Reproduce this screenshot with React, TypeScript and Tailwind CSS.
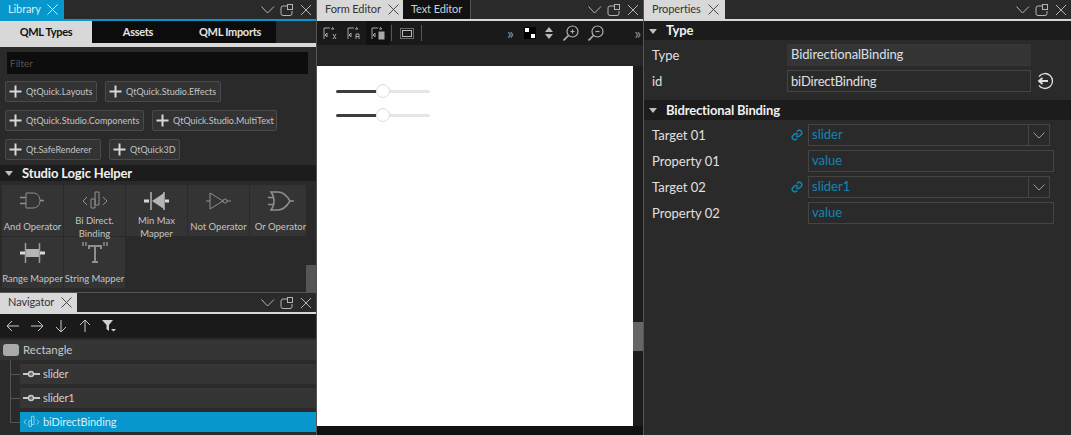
const font = "font-['Lato','Noto_Sans',sans-serif]";

function HeaderIcons() {
  return (
    <div className="ml-auto flex items-center pr-[5px]">
      <svg width="50" height="14" viewBox="0 0 50 14" fill="none" stroke="#b4b4b4" strokeWidth="1">
        <path d="M0.5 3.5 L6.5 10 L13 3.5" />
        <path d="M26 3 H22 a2 2 0 0 0 -2 2 V10.5 a2 2 0 0 0 2 2 H29 a2 2 0 0 0 2 -2 V8" />
        <rect x="26.5" y="1.5" width="5" height="5" />
        <path d="M40 2 L50 12 M50 2 L40 12" />
      </svg>
    </div>
  );
}

function CloseX({ color = "#4a4a4a" }: { color?: string }) {
  return (
    <svg width="11" height="11" viewBox="0 0 11 11" fill="none" stroke={color} strokeWidth="1" className="shrink-0">
      <path d="M0.5 0.5 L10.5 10.5 M10.5 0.5 L0.5 10.5" />
    </svg>
  );
}

function Tab({ label, w, active = false, blue = false }: { label: string; w: string; active?: boolean; blue?: boolean }) {
  if (blue) {
    return (
      <div className={`flex h-[19px] items-center gap-[6px] whitespace-nowrap bg-[#0797cd] pl-[8px] text-[11px] tracking-[-0.1px] text-[#d8eef7] ${w}`}>
        {label}
        <CloseX color="#e4f3f9" />
      </div>
    );
  }
  return (
    <div className={`flex h-[19px] items-center gap-[7px] whitespace-nowrap pl-[8px] text-[11px] tracking-[-0.1px] ${active ? "bg-[#d8d8d8] text-[#333]" : "border-r border-[#555] bg-[#111] text-[#c8d0d8]"} ${w}`}>
      {label}
      {active && <CloseX />}
    </div>
  );
}

function LibButton({ label, w }: { label: string; w: string }) {
  return (
    <div className={`flex h-[21px] items-center gap-[4px] whitespace-nowrap rounded-[2px] border border-[#4a4a4a] bg-[#333] pl-[3px] text-[9px] text-[#c4c4c4] ${w}`}>
      <svg width="13" height="13" viewBox="0 0 13 13" fill="#d8d8d8" className="shrink-0">
        <rect x="5.5" y="0.5" width="2" height="12" />
        <rect x="0.5" y="5.5" width="12" height="2" />
      </svg>
      {label}
    </div>
  );
}

const stroke = "#8f8f8f";
const logicIcons: Record<string, JSX.Element> = {
  and: (
    <svg width="26" height="22" viewBox="0 0 26 22" fill="none" stroke={stroke} strokeWidth="1">
      <path d="M6 3 H13 C18 3 20 7 20 10.500 C20 15 17 18 13 18 H6 Z" />
      <path d="M0 7.500 H6 M0 13.500 H6 M20 10.500 H24" strokeWidth="1.600" />
    </svg>
  ),
  bi: (
    <svg width="26" height="22" viewBox="0 0 26 22" fill="none" stroke={stroke} strokeWidth="1">
      <path d="M5 7 L1 11 L5 15 M21 7 L25 11 L21 15" />
      <path d="M9 18 V9 H13 V18 H9 Z M13 15 V2 H17 V15 H13 Z" />
    </svg>
  ),
  minmax: (
    <svg width="26" height="22" viewBox="0 0 26 22" fill="none">
      <path d="M8 11 L20 3 V19 Z" fill="#b5b5b5" />
      <path d="M7 2 V20" stroke="#b5b5b5" strokeWidth="1.500" />
      <path d="M20 2 V20" stroke="#b5b5b5" strokeWidth="1.500" />
      <path d="M0 11 H5 M21 11 H25" stroke="#d8d8d8" strokeWidth="3" />
    </svg>
  ),
  not: (
    <svg width="26" height="22" viewBox="0 0 26 22" fill="none" stroke={stroke} strokeWidth="1">
      <path d="M4 3 L17 11 L4 19 Z" />
      <circle cx="19" cy="11" r="2" />
      <path d="M0 11 H4 M21 11 H25" />
    </svg>
  ),
  or: (
    <svg width="26" height="22" viewBox="0 0 26 22" fill="none" stroke={stroke} strokeWidth="1.500">
      <path d="M3 2 H10 C15 2 19 6 22 11 C19 16 15 20 10 20 H3 C7 15 7 7 3 2 Z" />
      <path d="M0 7.500 H6 M0 14.500 H6 M22 11 H26" />
    </svg>
  ),
  range: (
    <svg width="26" height="22" viewBox="0 0 26 22" fill="none">
      <rect x="6" y="7" width="14" height="8" fill="#b5b5b5" />
      <path d="M5.500 1 V21 M19.500 1 V21" stroke="#9a9a9a" strokeWidth="1.500" />
      <path d="M0 11 H5 M20 11 H25" stroke="#d8d8d8" strokeWidth="3" />
    </svg>
  ),
  str: (
    <svg width="26" height="22" viewBox="0 0 26 22" fill="none" stroke={stroke} strokeWidth="2">
      <path d="M6 4 H20 M13 4 V20 M10 20 H16 M7 4 V7 M19 4 V7" />
      <path d="M1 0 V4 M4 0 V4 M22 0 V4 M25 0 V4" strokeWidth="1.500" />
    </svg>
  ),
};

const logicItems = [
  { key: "and", lines: ["And Operator"] },
  { key: "bi", lines: ["Bi Direct.", "Binding"] },
  { key: "minmax", lines: ["Min Max", "Mapper"] },
  { key: "not", lines: ["Not Operator"] },
  { key: "or", lines: ["Or Operator"] },
  { key: "range", lines: ["Range Mapper"] },
  { key: "str", lines: ["String Mapper"] },
];

function LogicItem({ item }: { item: (typeof logicItems)[number] }) {
  const two = item.lines.length > 1;
  return (
    <div className="flex h-[51px] w-full flex-col items-center bg-[#343434] pt-[5px] text-[9.5px] text-[#c4c4c4]">
      <div className="h-[22px] shrink-0">{logicIcons[item.key]}</div>
      <div className={`relative z-10 flex flex-col items-center whitespace-nowrap leading-[13px] ${two ? "mt-[2px]" : "mt-[8px]"}`}>
        {item.lines.map((l) => (
          <span key={l}>{l}</span>
        ))}
      </div>
    </div>
  );
}

function NavArrow({ d }: { d: string }) {
  return (
    <svg width="14" height="14" viewBox="0 0 14 14" fill="none" stroke="#c8c8c8" strokeWidth="1">
      <path d={d} />
    </svg>
  );
}

function SliderGlyph() {
  return (
    <svg width="17" height="8" viewBox="0 0 17 8" className="shrink-0">
      <rect x="0" y="3" width="17" height="2" fill="#c8c8c8" />
      <circle cx="8" cy="4" r="2.500" fill="#666" stroke="#c8c8c8" strokeWidth="1.500" />
    </svg>
  );
}

function TreeRow({ label, icon, selected = false }: { label: string; icon: JSX.Element; selected?: boolean }) {
  return (
    <div className="relative ml-[20px] h-[20px]">
      <div className="absolute left-[-10px] top-[10px] h-px w-[10px] bg-[#555]" />
      <div className={`flex h-full items-center gap-[3px] pl-[3px] text-[11px] tracking-[-0.1px] ${selected ? "bg-[#0797cd] text-[#d8eef7]" : "bg-[#353535] text-[#d0d0d0]"}`}>
        {icon}
        {label}
      </div>
    </div>
  );
}

function Slider() {
  return (
    <div className="relative h-[4px] w-[94px]">
      <div className="flex h-[3px]">
        <div className="w-[40px] rounded-l-full bg-[#3d3d3d]" />
        <div className="flex-1 rounded-r-full bg-[#e6e6e6]" />
      </div>
      <div className="absolute left-[40px] top-[-6px] h-[14px] w-[14px] rounded-full border border-[#dcdcdc] bg-white" />
    </div>
  );
}

function ToolGlyph({ children, dark = false }: { children: React.ReactNode; dark?: boolean }) {
  return (
    <div className={`flex h-[24px] w-[24px] items-center justify-center ${dark ? "bg-[#111]" : ""}`}>
      <svg width="14" height="14" viewBox="0 0 14 14" fill="none" stroke="#a8a8a8" strokeWidth="1">
        {children}
      </svg>
    </div>
  );
}

function SectionHead({ label, h = "h-[16px]" }: { label: string; h?: string }) {
  return (
    <div className={`flex items-center bg-[#1c1c1c] pt-px text-[13px] font-bold tracking-[-0.15px] text-[#f0f0f0] ${h}`}>
      <svg width="8" height="5" viewBox="0 0 8 5" fill="#c0c0c0" className="ml-[5px] mr-[9px]">
        <path d="M0 0 H8 L4 5 Z" />
      </svg>
      {label}
    </div>
  );
}

function LinkGlyph() {
  return (
    <svg width="12" height="12" viewBox="0 0 24 24" fill="none" stroke="#0f86b6" strokeWidth="3" className="mr-[5px] shrink-0">
      <path d="M10 13a5 5 0 0 0 7.500.5l3-3a5 5 0 0 0-7-7l-1.700 1.700" />
      <path d="M14 11a5 5 0 0 0-7.500-.5l-3 3a5 5 0 0 0 7 7l1.700-1.700" />
    </svg>
  );
}

function BindingRow({ label, value, combo = false }: { label: string; value: string; combo?: boolean }) {
  return (
    <div className="flex h-[22px] items-center text-[13px]">
      <div className="w-[139px] shrink-0 pt-[2px] text-[#e0e0e0]">{label}</div>
      <div className="flex w-[17px] shrink-0 justify-end">{combo && <LinkGlyph />}</div>
      <div className={`flex h-[22px] items-center border border-[#444] pl-[3px] text-[#0f86b6] ${combo ? "w-[242px]" : "w-[246px]"}`}>
        <span className="flex-1">{value}</span>
        {combo && (
          <div className="flex h-full w-[21px] items-center justify-center border-l border-[#444]">
            <svg width="12" height="7" viewBox="0 0 12 7" fill="none" stroke="#9a9a9a" strokeWidth="1">
              <path d="M0.500 0.500 L6 6 L11.500 0.500" />
            </svg>
          </div>
        )}
      </div>
    </div>
  );
}

export default function App() {
  return (
    <div className={`flex h-[435px] w-[1071px] overflow-hidden bg-[#111] ${font}`}>
      {/* Left: library + navigator */}
      <div className="flex w-[316px] shrink-0 flex-col">
        <div className="flex h-[19px] items-center bg-[#2a2a2a]">
          <Tab label="Library" w="w-[64px]" blue />
          <HeaderIcons />
        </div>
        <div className="h-[2px] bg-[#0797cd]" />
        <div className="flex h-[22px] bg-[#2a2a2a] text-[11px] font-bold tracking-[-0.3px]">
          <div className="flex w-[92px] items-center justify-center bg-[#d8d8d8] text-[#111]">QML Types</div>
          <div className="flex w-[92px] items-center justify-center bg-[#0c0c0c] text-[#e4e4e4]">Assets</div>
          <div className="flex w-[92px] items-center justify-center bg-[#0c0c0c] text-[#e4e4e4]">QML Imports</div>
        </div>
        <div className="h-[4px] bg-[#d8d8d8]" />
        <div className="relative h-[245px] bg-[#2a2a2a]">
          <div className="ml-[7px] mt-[5px] flex h-[22px] w-[301px] items-center bg-[#0d0d0d] pl-[3px] text-[10px] text-[#555]">Filter</div>
          <div className="ml-[5px] mt-[7px] flex gap-[8px]">
            <LibButton label="QtQuick.Layouts" w="w-[92px]" />
            <LibButton label="QtQuick.Studio.Effects" w="w-[116px]" />
          </div>
          <div className="ml-[5px] mt-[8px] flex gap-[8px]">
            <LibButton label="QtQuick.Studio.Components" w="w-[139px]" />
            <LibButton label="QtQuick.Studio.MultiText" w="w-[125px]" />
          </div>
          <div className="ml-[5px] mt-[8px] flex gap-[8px]">
            <LibButton label="Qt.SafeRenderer" w="w-[96px]" />
            <LibButton label="QtQuick3D" w="w-[71px]" />
          </div>
          <div className="mt-[5px]">
            <SectionHead label="Studio Logic Helper" />
          </div>
          <div className="ml-[2px] mt-[4px] grid w-[304px] grid-cols-[repeat(5,61px)] gap-[1px] overflow-hidden">
            {logicItems.map((item) => (
              <LogicItem key={item.key} item={item} />
            ))}
          </div>
          <div className="absolute right-0 top-[218px] h-[27px] w-[10px] bg-[#555]" />
        </div>
        <div className="h-[1px] bg-[#555]" />
        <div className="flex h-[19px] items-center bg-[#2a2a2a]">
          <Tab label="Navigator" w="w-[77px]" active />
          <HeaderIcons />
        </div>
        <div className="h-[2px] bg-[#d8d8d8]" />
        <div className="flex h-[24px] items-center gap-[10px] bg-[#1a1a1a] pl-[6px]">
          <NavArrow d="M13 7 H1 M6 2 L1 7 L6 12" />
          <NavArrow d="M1 7 H13 M8 2 L13 7 L8 12" />
          <NavArrow d="M7 1 V13 M2 8 L7 13 L12 8" />
          <NavArrow d="M7 13 V1 M2 6 L7 1 L12 6" />
          <svg width="14" height="14" viewBox="0 0 14 14" fill="#d0d0d0">
            <path d="M0 1 H11 L7 6 V12 L4.500 10 V6 Z" />
            <path d="M9 10 H14 L11.500 12.500 Z" />
          </svg>
        </div>
        <div className="relative flex-1 bg-[#2a2a2a] pt-[2px]">
          <div className="mb-[4px] flex h-[20px] items-center gap-[4px] bg-[#353535] pl-[3px] text-[11.5px] text-[#c8c8c8]">
            <div className="h-[12px] w-[16px] rounded-[3px] bg-[#aaa]" />
            Rectangle
          </div>
          <div className="absolute left-[10px] top-[22px] h-[62px] w-px bg-[#555]" />
          <div className="flex flex-col gap-[4px]">
            <TreeRow label="slider" icon={<SliderGlyph />} />
            <TreeRow label="slider1" icon={<SliderGlyph />} />
            <TreeRow
              label="biDirectBinding"
              selected
              icon={
                <svg width="17" height="14" viewBox="0 0 26 22" fill="none" stroke="#a8d8ea" strokeWidth="1.300" className="shrink-0">
                  <path d="M5 7 L1 11 L5 15 M21 7 L25 11 L21 15" />
                  <path d="M9 18 V9 H13 V18 H9 Z M13 15 V2 H17 V15 H13 Z" />
                </svg>
              }
            />
          </div>
        </div>
      </div>

      <div className="w-px shrink-0 bg-[#555]" />

      {/* Center: form editor */}
      <div className="flex w-[326px] shrink-0 flex-col">
        <div className="flex h-[19px] items-center bg-[#2a2a2a]">
          <Tab label="Form Editor" w="w-[86px]" active />
          <Tab label="Text Editor" w="w-[68px]" />
          <HeaderIcons />
        </div>
        <div className="h-[2px] bg-[#d8d8d8]" />
        <div className="flex h-[24px] items-center bg-[#1a1a1a] pl-[1px]">
          <ToolGlyph>
            <path d="M1 13 V2 H7 M9 1 L11 3 H8 M10 8 L13 13 M13 8 L10 13 M2 9 L4 11 V7 Z" />
          </ToolGlyph>
          <ToolGlyph>
            <path d="M1 13 V2 H7 M9 1 L11 3 H8 M9 13 V8 H12 V13 M9 10.500 H12 M2 9 L4 11 V7 Z" />
          </ToolGlyph>
          <ToolGlyph dark>
            <path d="M1 13 V2 H7 M9 1 L11 3 H8 M2 9 L4 11 V7 Z" />
            <rect x="8" y="6" width="5" height="7" fill="#a8a8a8" />
          </ToolGlyph>
          <div className="mx-[1px] h-[16px] w-px bg-[#555]" />
          <div className="flex h-[24px] w-[28px] items-center justify-center">
            <svg width="14" height="11" viewBox="0 0 14 11" fill="none" stroke="#b8b8b8" strokeWidth="1">
              <rect x="2.500" y="2.500" width="9" height="6" />
              <rect x="0.500" y="0.500" width="13" height="10" strokeDasharray="1 1" />
            </svg>
          </div>
          <div className="h-[16px] w-px bg-[#555]" />
          <span className="ml-[85px] text-[16px] leading-none text-[#999]">»</span>
          <div className="ml-[10px] grid h-[12px] w-[12px] grid-cols-2 bg-black">
            <div className="m-[1px] bg-white" />
            <div />
            <div />
            <div className="m-[1px] bg-white" />
          </div>
          <svg width="8" height="12" viewBox="0 0 8 12" fill="#b8b8b8" className="ml-[9px]">
            <path d="M4 0 L8 5 H0 Z M4 12 L0 7 H8 Z" />
          </svg>
          {["M5 6.500 H9 M7 4.500 V8.500", "M5 6.500 H9"].map((d, i) => (
            <svg key={d} width="16" height="16" viewBox="0 0 16 16" fill="none" stroke="#b0b0b0" strokeWidth="1.200" className={i === 0 ? "ml-[10px]" : "ml-[9px]"}>
              <circle cx="9.500" cy="6.500" r="5.500" />
              <path d={i === 0 ? "M7.500 6.500 H11.500 M9.500 4.500 V8.500" : "M7.500 6.500 H11.500"} />
              <path d="M5.500 10.500 L0.500 15.500" strokeWidth="1.600" />
            </svg>
          ))}
          <span className="ml-auto pr-[2px] text-[16px] leading-none text-[#999]">»</span>
        </div>
        <div className="h-[21px] bg-[#262626]" />
        <div className="flex h-[360px]">
          <div className="flex w-[316px] flex-col gap-[20px] bg-white pl-[19px] pt-[24px]">
            <Slider />
            <Slider />
          </div>
          <div className="flex flex-1 flex-col bg-[#1c1c1c]">
            <div className="mt-[256px] h-[29px] bg-[#666]" />
          </div>
        </div>
      </div>

      <div className="w-px shrink-0 bg-[#555]" />

      {/* Right: properties */}
      <div className="flex flex-1 flex-col bg-[#2a2a2a]">
        <div className="flex h-[19px] items-center">
          <Tab label="Properties" w="w-[81px]" active />
          <HeaderIcons />
        </div>
        <div className="h-[2px] bg-[#d8d8d8]" />
        <SectionHead label="Type" h="h-[19px]" />
        <div className="px-[8px] pt-[4px]">
          <div className="flex h-[22px] items-center text-[13px]">
            <div className="w-[135px] pt-[2px] text-[#e0e0e0]">Type</div>
            <div className="flex h-[22px] w-[244px] items-center bg-[#353535] pl-[4px] tracking-[-0.1px] text-[#d8e0e8]">BidirectionalBinding</div>
          </div>
          <div className="mt-[4px] flex h-[22px] items-center text-[13px]">
            <div className="w-[135px] pt-[2px] text-[#e0e0e0]">id</div>
            <div className="flex h-[22px] w-[244px] items-center border border-[#444] pl-[3px] pt-[2px] tracking-[-0.2px] text-[#e0e0e0]">biDirectBinding</div>
            <svg width="18" height="18" viewBox="0 0 18 18" fill="none" stroke="#e0e0e0" strokeWidth="1.300" className="ml-[5px]">
              <path d="M3 4.500 A7.500 7.500 0 1 1 3 13.500" />
              <path d="M12 9 H3 M6.500 6 L3 9 L6.500 12" strokeWidth="1.800" />
            </svg>
          </div>
        </div>
        <div className="mt-[8px]">
          <SectionHead label="Bidrectional Binding" h="h-[20px]" />
        </div>
        <div className="flex flex-col gap-[4px] pl-[8px] pt-[4px]">
          <BindingRow label="Target 01" value="slider" combo />
          <BindingRow label="Property 01" value="value" />
          <BindingRow label="Target 02" value="slider1" combo />
          <BindingRow label="Property 02" value="value" />
        </div>
      </div>
    </div>
  );
}
